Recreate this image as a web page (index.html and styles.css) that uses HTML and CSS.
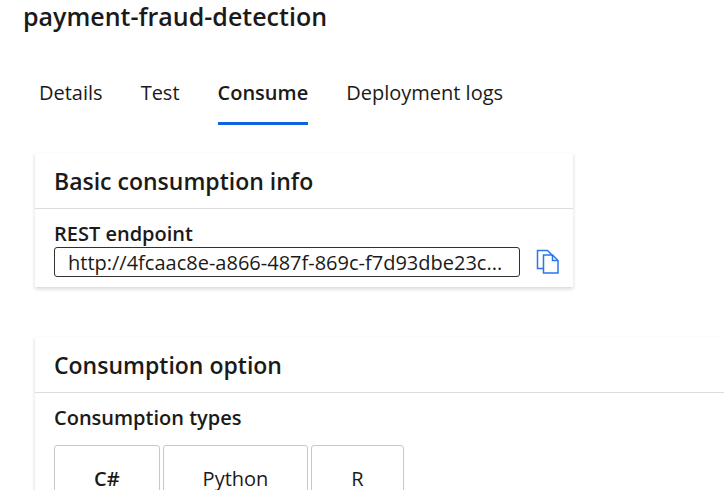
FILE: index.html
```html
<!DOCTYPE html>
<html lang="en">
<head>
<meta charset="utf-8">
<title>payment-fraud-detection</title>
<link rel="stylesheet" href="styles.css">
</head>
<body>
<main class="page">
  <h1 class="title">payment-fraud-detection</h1>
  <nav class="tabs">
    <a class="tab" href="#details">Details</a>
    <a class="tab" href="#test">Test</a>
    <a class="tab tab-active" href="#consume" aria-current="page">Consume</a>
    <a class="tab" href="#logs">Deployment logs</a>
  </nav>
  <section class="card card-info">
    <h2 class="card-title">Basic consumption info</h2>
    <div class="card-body">
      <label class="label" for="endpoint">REST endpoint</label>
      <div class="field">
        <input class="input" id="endpoint" type="text" readonly value="http://4fcaac8e-a866-487f-869c-f7d93dbe23c...">
        <button class="copy" type="button" aria-label="Copy">
          <svg width="24" height="26" viewBox="0 0 24 26" fill="none" stroke="#2a74ee" stroke-width="1.5">
            <path d="M7 19.5H1.5V1.5H11.5L16 6"/>
            <path d="M7.5 6H16.5L22 11.5V24H7.5Z"/>
            <path d="M16.5 6V11.5H22"/>
          </svg>
        </button>
      </div>
    </div>
  </section>
  <section class="card card-option">
    <h2 class="card-title">Consumption option</h2>
    <div class="card-body">
      <h3 class="label" id="types">Consumption types</h3>
      <div class="types" role="group" aria-labelledby="types">
        <button class="type type-active" type="button">C#</button>
        <button class="type" type="button">Python</button>
        <button class="type" type="button">R</button>
      </div>
    </div>
  </section>
</main>
</body>
</html>
```
FILE: styles.css
```css
* {
  box-sizing: border-box;
}

body {
  margin: 0;
  background: #fff;
  color: #1b1a19;
  font-family: "Segoe UI", "Open Sans", "Noto Sans", sans-serif;
  font-size: 20px;
  line-height: 26px;
}

.page {
  height: calc(100vh - 6px);
  overflow: hidden;
}

.title {
  margin: 0 0 42px 23px;
  font-size: 25px;
  font-weight: 600;
  line-height: 32px;
}

.tabs {
  display: flex;
  gap: 38px;
  margin: 0 0 28px 39px;
}

.tab {
  padding: 6px 0 16px;
  border-bottom: 3px solid transparent;
  color: inherit;
  text-decoration: none;
  white-space: nowrap;
}

.tab-active {
  border-color: #0f62e0;
  font-weight: 600;
}

.card {
  margin-left: 35px;
  background: #fff;
  box-shadow: 0 2px 4px rgba(0, 0, 0, 0.16);
}

.card-info {
  max-width: 538px;
  margin-bottom: 50px;
}

.card-title {
  margin: 0;
  padding: 13px 19px 11px;
  border-bottom: 1px solid #dcdcdc;
  font-size: 23px;
  font-weight: 600;
  line-height: 31px;
}

.card-body {
  padding: 12px 13px 10px 19px;
}

.label {
  display: block;
  margin: 0;
  font-size: 20px;
  font-weight: 600;
  line-height: 26px;
}

.field {
  display: flex;
  align-items: center;
  gap: 16px;
}

.input {
  flex: 1;
  min-width: 0;
  height: 30px;
  padding: 0 13px;
  border: 1px solid #323130;
  border-radius: 3px;
  background: #fff;
  color: inherit;
  font: inherit;
}

.copy {
  padding: 0;
  border: 0;
  background: none;
  line-height: 0;
}

.types {
  display: flex;
  gap: 3px;
  margin-top: 14px;
}

.type {
  padding: 20px 39px;
  border: 1px solid #c8c8c8;
  border-radius: 3px;
  background: #fff;
  color: inherit;
  font: inherit;
}

.type-active {
  font-weight: 600;
}
```
